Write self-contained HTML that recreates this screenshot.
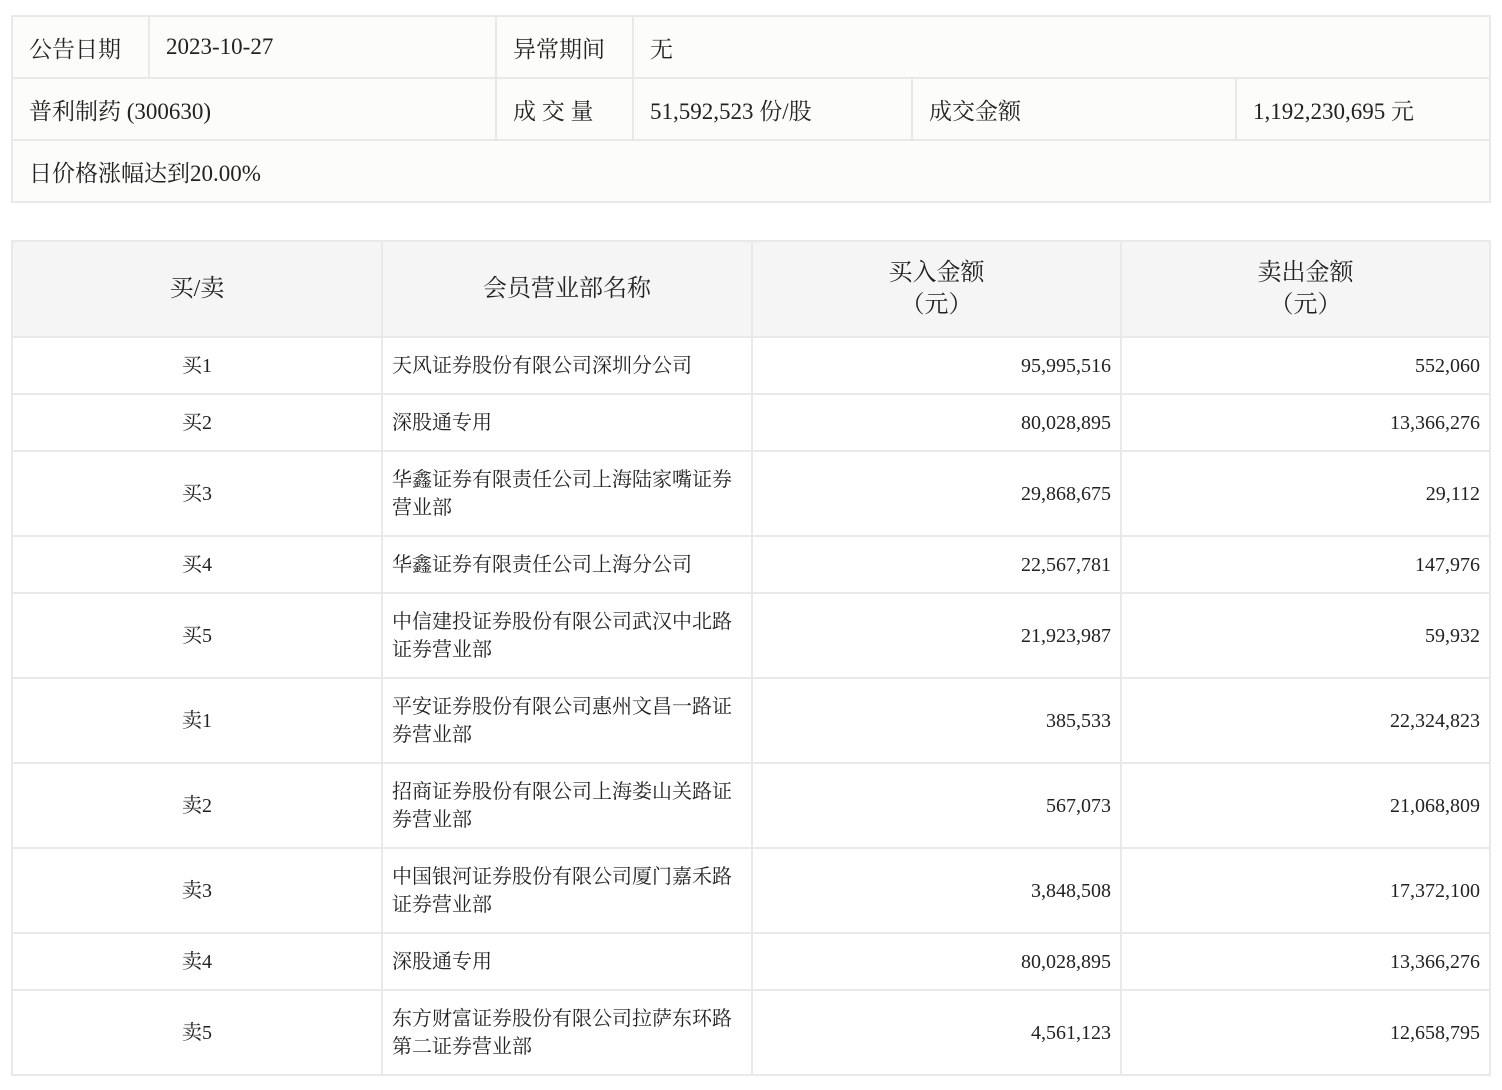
<!DOCTYPE html>
<html><head><meta charset="utf-8"><style>
body{margin:0;background:#fff;font-family:"Liberation Serif","Noto Serif CJK SC",serif;color:#222;}
table{border-collapse:collapse;position:absolute;left:11px;width:1478px;table-layout:fixed;}
td,th{border:2px solid #e9e9e7;padding:0;}
#t1{top:15px;background:#fcfcfa;font-size:23px;}
#t1 td{height:60px;padding-left:16px;}
#t2{top:240px;font-size:20px;}
#t2 th{background:#f5f5f5;font-weight:normal;font-size:24px;height:94px;line-height:32px;}
#t2 td{background:#fff;line-height:28px;}
#t2 td.c{text-align:center}
#t2 td.n{padding-left:9px}
#t2 td.r{text-align:right;padding-right:9px}
</style></head><body>
<table id="t1">
<colgroup><col style="width:137px"><col style="width:347px"><col style="width:137px"><col style="width:279px"><col style="width:324px"><col style="width:254px"></colgroup>
<tr><td>公告日期</td><td>2023-10-27</td><td>异常期间</td><td colspan="3">无</td></tr>
<tr><td colspan="2">普利制药 (300630)</td><td>成 交 量</td><td>51,592,523 份/股</td><td>成交金额</td><td>1,192,230,695 元</td></tr>
<tr><td colspan="6">日价格涨幅达到20.00%</td></tr>
</table>
<table id="t2">
<colgroup><col style="width:370px"><col style="width:370px"><col style="width:369px"><col style="width:369px"></colgroup>
<tr><th>买/卖</th><th>会员营业部名称</th><th>买入金额<br>（元）</th><th>卖出金额<br>（元）</th></tr>
<tr style="height:57px"><td class="c">买1</td><td class="n">天风证券股份有限公司深圳分公司</td><td class="r">95,995,516</td><td class="r">552,060</td></tr>
<tr style="height:57px"><td class="c">买2</td><td class="n">深股通专用</td><td class="r">80,028,895</td><td class="r">13,366,276</td></tr>
<tr style="height:85px"><td class="c">买3</td><td class="n">华鑫证券有限责任公司上海陆家嘴证券<br>营业部</td><td class="r">29,868,675</td><td class="r">29,112</td></tr>
<tr style="height:57px"><td class="c">买4</td><td class="n">华鑫证券有限责任公司上海分公司</td><td class="r">22,567,781</td><td class="r">147,976</td></tr>
<tr style="height:85px"><td class="c">买5</td><td class="n">中信建投证券股份有限公司武汉中北路<br>证券营业部</td><td class="r">21,923,987</td><td class="r">59,932</td></tr>
<tr style="height:85px"><td class="c">卖1</td><td class="n">平安证券股份有限公司惠州文昌一路证<br>券营业部</td><td class="r">385,533</td><td class="r">22,324,823</td></tr>
<tr style="height:85px"><td class="c">卖2</td><td class="n">招商证券股份有限公司上海娄山关路证<br>券营业部</td><td class="r">567,073</td><td class="r">21,068,809</td></tr>
<tr style="height:85px"><td class="c">卖3</td><td class="n">中国银河证券股份有限公司厦门嘉禾路<br>证券营业部</td><td class="r">3,848,508</td><td class="r">17,372,100</td></tr>
<tr style="height:57px"><td class="c">卖4</td><td class="n">深股通专用</td><td class="r">80,028,895</td><td class="r">13,366,276</td></tr>
<tr style="height:85px"><td class="c">卖5</td><td class="n">东方财富证券股份有限公司拉萨东环路<br>第二证券营业部</td><td class="r">4,561,123</td><td class="r">12,658,795</td></tr>
</table>
</body></html>
